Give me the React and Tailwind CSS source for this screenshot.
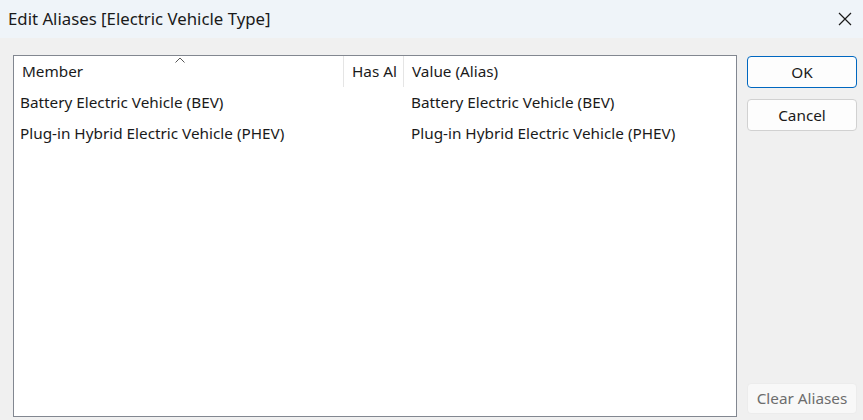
import React from "react";

const rows = [
  { member: "Battery Electric Vehicle (BEV)", alias: "Battery Electric Vehicle (BEV)" },
  { member: "Plug-in Hybrid Electric Vehicle (PHEV)", alias: "Plug-in Hybrid Electric Vehicle (PHEV)" },
];

export default function App() {
  return (
    <div className="w-[863px] h-[420px] bg-[#f0f0f0] flex flex-col overflow-hidden text-[#1a1a1a] font-['Noto_Sans',sans-serif] text-[15.3px]">
      {/* title bar */}
      <div className="h-[38px] bg-[#eff4f9] flex items-center justify-between pl-[8px] pr-[10px] pb-[1px] shrink-0">
        <span className="text-[16.8px]">Edit Aliases [Electric Vehicle Type]</span>
        <svg width="16" height="16" viewBox="0 0 16 16" className="text-[#1a1a1a]">
          <path d="M2 2 L14 14 M14 2 L2 14" stroke="currentColor" strokeWidth="1.2" fill="none" />
        </svg>
      </div>

      <div className="flex-1 flex pt-[17px] pl-[13px] pr-[6px] pb-[3px] gap-[10px]">
        {/* list view */}
        <div className="w-[724px] h-[362px] bg-white border border-[#828790]">
          <div className="relative flex h-[31px] items-center">
            <div className="w-[330px] pl-[8px] h-full flex items-center border-r border-[#e5e5e5]">Member</div>
            <div className="w-[60px] pl-[8px] h-full flex items-center border-r border-[#e5e5e5] whitespace-nowrap">Has Al</div>
            <div className="pl-[8px] h-full flex items-center">Value (Alias)</div>
            <svg width="10" height="6" viewBox="0 0 10 6" className="absolute left-[161px] top-[1px]">
              <path d="M0.5 5.5 L5 1 L9.5 5.5" stroke="#555" strokeWidth="1" fill="none" />
            </svg>
          </div>
          {rows.map((r) => (
            <div key={r.member} className="flex h-[31px] items-center whitespace-nowrap">
              <div className="w-[390px] pl-[6px]">{r.member}</div>
              <div className="pl-[7px]">{r.alias}</div>
            </div>
          ))}
        </div>

        {/* buttons */}
        <div className="flex flex-col w-[110px]">
          <button className="h-[32px] mt-[1px] rounded-[4px] border border-[#0067c0] bg-[#fdfdfd]">OK</button>
          <button className="h-[32px] mt-[11px] rounded-[4px] border border-[#d1d1d1] bg-[#fdfdfd]">Cancel</button>
          <button className="h-[31px] mt-auto mb-[3px] rounded-[4px] border border-[#ececec] bg-[#f8f8f8] text-[#6d6d6d]">Clear Aliases</button>
        </div>
      </div>
    </div>
  );
}
